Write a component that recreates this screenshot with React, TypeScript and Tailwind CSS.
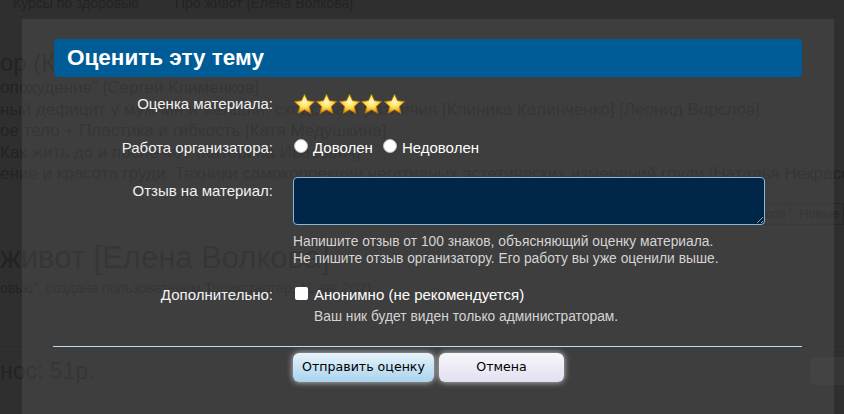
import React from 'react';

const font = { fontFamily: '"Liberation Sans", Arial, sans-serif' };

function Star({ id }: { id: string }) {
  return (
    <svg width="23" height="22" viewBox="0 0 24 23" className="-mr-[0.6px]">
      <defs>
        <radialGradient id={id} cx="50%" cy="40%" r="60%">
          <stop offset="0%" stopColor="#fffbd0" />
          <stop offset="45%" stopColor="#ffe35a" />
          <stop offset="100%" stopColor="#e08a00" />
        </radialGradient>
      </defs>
      <path
        d="M12 1.2l3.2 6.9 7.5.8-5.6 5.1 1.6 7.4L12 17.6l-6.7 3.8 1.6-7.4-5.6-5.1 7.5-.8z"
        fill={`url(#${id})`}
        stroke="#b86e00"
        strokeWidth="0.8"
        strokeLinejoin="round"
      />
    </svg>
  );
}

function PageBehind() {
  return (
    <div className="absolute inset-0 text-[#232323] whitespace-nowrap" style={font}>
      <div className="flex text-[14px] leading-[16px] -mt-[5px]">
        <span className="ml-[13px]">Курсы по здоровью</span>
        <span className="ml-[36px]">Про живот [Елена Волкова]</span>
      </div>
      <div className="text-[24px] leading-[28px] mt-[38px]">ор (Курсы по здоровью)</div>
      <div className="text-[17px] leading-[21.5px]">
        <div>опохудение" [Сергей Клименков]</div>
        <div>ный дефицит у мужчин и женщин: сходства и различия [Клиника Калинченко] [Леонид Ворслов]</div>
        <div>ое тело + Пластика и гибкость [Катя Медушкина]</div>
        <div>Как жить до и после 40? [Катерина Ивасович]</div>
        <div>ение и красота груди. Техники самокоррекции негативных эстетических изменений груди [Наталья Некрасова]</div>
      </div>
      <div className="flex justify-end mt-[18px]">
        <div className="flex h-[22px] items-center text-[13px] border border-[#282828] rounded-l-[3px]">
          <span className="px-[4px] border-r border-[#282828]">Опросов</span>
          <span className="px-[8px] w-[52px]">Новые сообщения</span>
        </div>
      </div>
      <div className="text-[31px] leading-[36px] mt-[15px]">живот [Елена Волкова]</div>
      <div className="text-[14px] leading-[16px] mt-[4px]">овью", создана пользователем Топикстартер, 11 авг 2021</div>
      <div className="h-px bg-[#2a2a2a] mt-[50px]" />
      <div className="flex items-center justify-between mt-[10px]">
        <span className="text-[23px] leading-[28px]">нос: 51р.</span>
        <span className="w-[34px] h-[28px] rounded-l-[5px] bg-[#363636]" />
      </div>
    </div>
  );
}

export default function App() {
  return (
    <div className="relative w-[844px] h-[414px] overflow-hidden bg-[#2f2f2f]">
      <PageBehind />
      <div className="absolute left-[22px] top-[19px] w-[812px] h-[420px] bg-[rgba(100,100,100,0.3)] px-[32px] pt-[20px]" style={font}>
        <div className="h-[38px] rounded-[4px] bg-[#005c97] flex items-center px-[13px]">
          <h2 className="text-white font-bold text-[22.5px] leading-none">Оценить эту тему</h2>
        </div>

        <div className="grid grid-cols-[219px_1fr] gap-x-[20px] mt-[15px] text-[15px] text-[#f2f2f2]">
          <div className="h-[24px] flex items-center justify-end">Оценка материала:</div>
          <div className="h-[24px] flex items-center">
            {[0, 1, 2, 3, 4].map((i) => (
              <Star key={i} id={`st${i}`} />
            ))}
          </div>

          <div className="h-[24px] mt-[20px] flex items-center justify-end">Работа организатора:</div>
          <div className="h-[24px] mt-[20px] flex items-center text-[15px] text-white">
            <span className="w-[14px] h-[14px] rounded-full bg-white border border-[#bbb] mr-[5px] -mt-[4px] ml-[1px]" />
            <span>Доволен</span>
            <span className="w-[14px] h-[14px] rounded-full bg-white border border-[#bbb] ml-[10px] mr-[5px] -mt-[4px]" />
            <span>Недоволен</span>
          </div>

          <div className="mt-[17px] pt-[6px] leading-[16px] text-right">Отзыв на материал:</div>
          <div className="mt-[17px]">
            <textarea
              className="block w-[472px] h-[48px] rounded-[4px] bg-[#00264a] border border-[#86b9dc] outline-none"
              readOnly
            />
            <div className="mt-[8px] text-[13.8px] leading-[17px] text-[#d4d4d4]">
              <div>Напишите отзыв от 100 знаков, объясняющий оценку материала.</div>
              <div>Не пишите отзыв организатору. Его работу вы уже оценили выше.</div>
            </div>
          </div>

          <div className="h-[20px] mt-[18px] flex items-center justify-end">Дополнительно:</div>
          <div className="mt-[18px]">
            <div className="h-[20px] flex items-center text-white">
              <span className="w-[13px] h-[13px] rounded-[2px] bg-white ml-[2px] mr-[6px] -mt-[4px]" />
              <span>Анонимно (не рекомендуется)</span>
            </div>
            <div className="ml-[21px] mt-[4px] text-[13.8px] leading-[16px] text-[#d4d4d4]">
              Ваш ник будет виден только администраторам.
            </div>
          </div>
        </div>

        <div className="h-px bg-[#bcdcf2] mt-[21px] -ml-[1px]" />

        <div className="flex gap-[5px] mt-[6px] ml-[239px]" style={{ fontFamily: '"DejaVu Sans", Verdana, sans-serif' }}>
          <button className="w-[141px] h-[29px] rounded-[6px] bg-gradient-to-b from-[#e6f3fb] to-[#a9d3ee] text-black text-[12.6px] shadow-[0_0_6px_rgba(255,255,255,0.75)]">
            Отправить оценку
          </button>
          <button className="w-[125px] h-[29px] rounded-[6px] bg-gradient-to-b from-[#f7f6fb] to-[#e2e0ef] text-black text-[12.6px] shadow-[0_0_6px_rgba(255,255,255,0.75)]">
            Отмена
          </button>
        </div>
      </div>
    </div>
  );
}
